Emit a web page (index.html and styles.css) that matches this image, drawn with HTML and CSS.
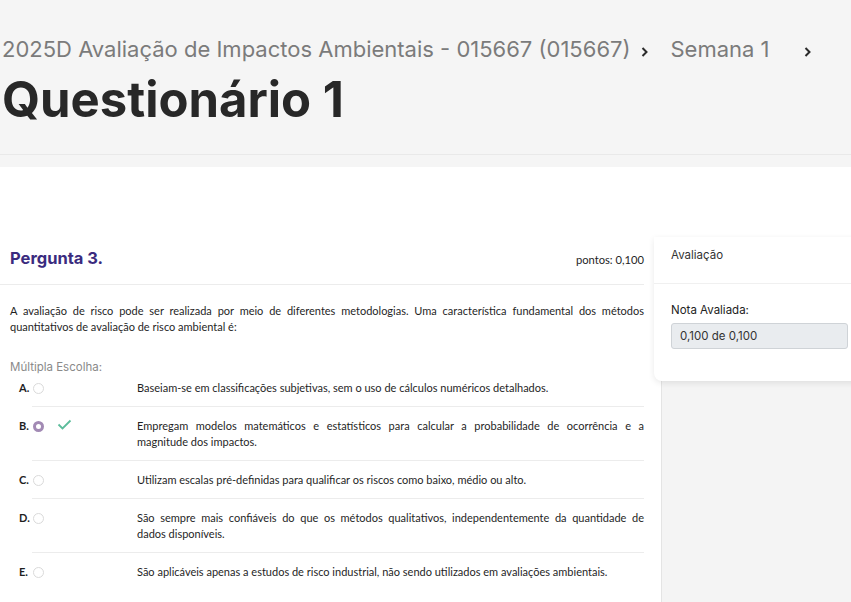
FILE: index.html
```html
<!DOCTYPE html>
<html lang="pt">
<head>
  <meta charset="UTF-8">
  <meta name="viewport" content="width=device-width, initial-scale=1.0">
  <title>Questionário 1</title>
  <link rel="stylesheet" href="styles.css">
</head>
<body>

  <header class="page-header">
    <nav class="breadcrumb">
      <span>2025D Avaliação de Impactos Ambientais - 015667 (015667)</span>
      <svg class="crumb-arrow" width="9" height="12" viewBox="0 0 9 12"><polyline points="2.5,2 6.5,6 2.5,10" /></svg>
      <span>Semana 1</span>
      <svg class="crumb-arrow crumb-last" width="9" height="12" viewBox="0 0 9 12"><polyline points="2.5,2 6.5,6 2.5,10" /></svg>
    </nav>
    <h1 class="page-title">Questionário 1</h1>
  </header>

  <main class="layout">
    <section class="question">
      <div class="question-head">
        <h2>Pergunta 3.</h2>
        <span class="points">pontos: 0,100</span>
      </div>

      <p class="question-text">A avaliação de risco pode ser realizada por meio de diferentes metodologias. Uma característica fundamental dos métodos quantitativos de avaliação de risco ambiental é:</p>

      <div class="choice-label">Múltipla Escolha:</div>

      <ul class="options">
        <li class="option">
          <span class="letter">A.</span>
          <span class="radio"></span>
          <span class="mark"></span>
          <span class="answer">Baseiam-se em classificações subjetivas, sem o uso de cálculos numéricos detalhados.</span>
        </li>
        <li class="option">
          <span class="letter">B.</span>
          <span class="radio checked"></span>
          <span class="mark">
            <svg width="15" height="11" viewBox="0 0 15 11"><polyline points="1.5,5.5 5.5,9.5 13.5,1.5" /></svg>
          </span>
          <span class="answer"><span class="full-line">Empregam modelos matemáticos e estatísticos para calcular a probabilidade de ocorrência e a</span> magnitude dos impactos.</span>
        </li>
        <li class="option">
          <span class="letter">C.</span>
          <span class="radio"></span>
          <span class="mark"></span>
          <span class="answer">Utilizam escalas pré-definidas para qualificar os riscos como baixo, médio ou alto.</span>
        </li>
        <li class="option">
          <span class="letter">D.</span>
          <span class="radio"></span>
          <span class="mark"></span>
          <span class="answer"><span class="full-line">São sempre mais confiáveis do que os métodos qualitativos, independentemente da quantidade de</span> dados disponíveis.</span>
        </li>
        <li class="option">
          <span class="letter">E.</span>
          <span class="radio"></span>
          <span class="mark"></span>
          <span class="answer">São aplicáveis apenas a estudos de risco industrial, não sendo utilizados em avaliações ambientais.</span>
        </li>
      </ul>
    </section>

    <aside class="sidebar">
      <div class="grade-card">
        <div class="grade-head">Avaliação</div>
        <div class="grade-body">
          <div class="grade-label">Nota Avaliada:</div>
          <div class="grade-value">0,100 de 0,100</div>
        </div>
      </div>
      <div class="sidebar-fill"></div>
    </aside>
  </main>

</body>
</html>
```

FILE: styles.css
```css
body {
  margin: 0;
  padding: 0;
  background-color: #fff;
  font-family: "Inter", "Liberation Sans", sans-serif;
  color: #222;
  overflow: hidden;
}

.page-header {
  background-color: #f5f5f5;
  padding-top: 37px;
  padding-bottom: 12px;
}

.breadcrumb {
  display: flex;
  align-items: center;
  padding-left: 2px;
  font-size: 22px;
  line-height: 25px;
  color: #7b7b7b;
  white-space: nowrap;
}

.crumb-arrow {
  margin: 4px 22px 0 9px;
}

.crumb-arrow polyline {
  fill: none;
  stroke: #2b2b2b;
  stroke-width: 2;
}

.crumb-last {
  margin-left: 33px;
}

.page-title {
  margin: 12px 0 0;
  padding: 0 0 28px 2px;
  font-size: 49px;
  line-height: 52px;
  font-weight: 700;
  color: #282828;
  border-bottom: 1px solid #e9e9e9;
}

.layout {
  display: grid;
  grid-template-columns: 644px 211px;
  column-gap: 10px;
  padding-top: 70px;
  min-height: 365px;
}

/* question column */

.question {
  font-family: "Lato", "Liberation Sans", sans-serif;
  font-size: 11px;
  color: #1f1f1f;
}

.question-head {
  display: flex;
  justify-content: space-between;
  align-items: flex-start;
  box-sizing: border-box;
  height: 48px;
  padding: 11px 0 0 10px;
  border-bottom: 1px solid #ececec;
}

.question-head h2 {
  margin: 0;
  font-family: "Inter", sans-serif;
  font-size: 16.5px;
  line-height: 20px;
  font-weight: 700;
  color: #3a2b7e;
}

.points {
  margin-top: 4px;
  font-size: 11.2px;
  line-height: 16px;
}

.question-text {
  margin: 18px 0 0;
  padding-left: 10px;
  line-height: 16px;
  text-align: justify;
}

.choice-label {
  margin-top: 24px;
  padding-left: 10px;
  font-family: "Inter", sans-serif;
  font-size: 11.5px;
  line-height: 16px;
  color: #8a8a8a;
}

.options {
  list-style: none;
  margin: 0 0 0 32px;
  padding: 0;
}

.option {
  display: flex;
  align-items: flex-start;
  padding: 11px 0 10px;
  line-height: 16px;
  border-bottom: 1px solid #ececec;
}

.option:first-child {
  padding-top: 5px;
}

.option:last-child {
  border-bottom: none;
}

.letter {
  width: 13px;
  margin-left: -13px;
  font-weight: 700;
}

.radio {
  box-sizing: border-box;
  width: 11px;
  height: 11px;
  margin: 3px 0 0 1px;
  border: 1px solid #dadada;
  border-radius: 50%;
  background-color: #fff;
}

.radio.checked {
  border: 3.5px solid #a28ab4;
}

.mark {
  width: 93px;
  padding-left: 13px;
  box-sizing: border-box;
}

.mark svg {
  display: block;
  margin-top: 1px;
}

.mark polyline {
  fill: none;
  stroke: #5cbc9b;
  stroke-width: 1.8;
}

.answer {
  flex: 1;
  text-align: justify;
}

.full-line {
  display: block;
  text-align-last: justify;
}

/* sidebar */

.sidebar {
  display: flex;
  flex-direction: column;
  font-size: 11.5px;
}

.grade-card {
  position: relative;
  z-index: 1;
  height: 144px;
  background-color: #fff;
  border-radius: 0 0 0 8px;
  box-shadow: 0 2px 6px rgba(0, 0, 0, 0.09);
}

.grade-head {
  padding: 10px 17px 0;
  height: 36px;
  line-height: 16px;
  color: #333;
  border-bottom: 1px solid #f0f0f0;
}

.grade-body {
  padding: 18px 17px 0;
}

.grade-label {
  line-height: 16px;
  color: #222;
  margin-bottom: 5px;
}

.grade-value {
  height: 24px;
  padding-left: 8px;
  line-height: 24px;
  color: #333;
  background-color: #e9ecef;
  border: 1px solid #cfd3d7;
  border-radius: 3px;
}

.sidebar-fill {
  flex: 1;
  margin-left: 7px;
  background-color: #f4f4f4;
  border-left: 1px solid #e4e4e4;
}
```
